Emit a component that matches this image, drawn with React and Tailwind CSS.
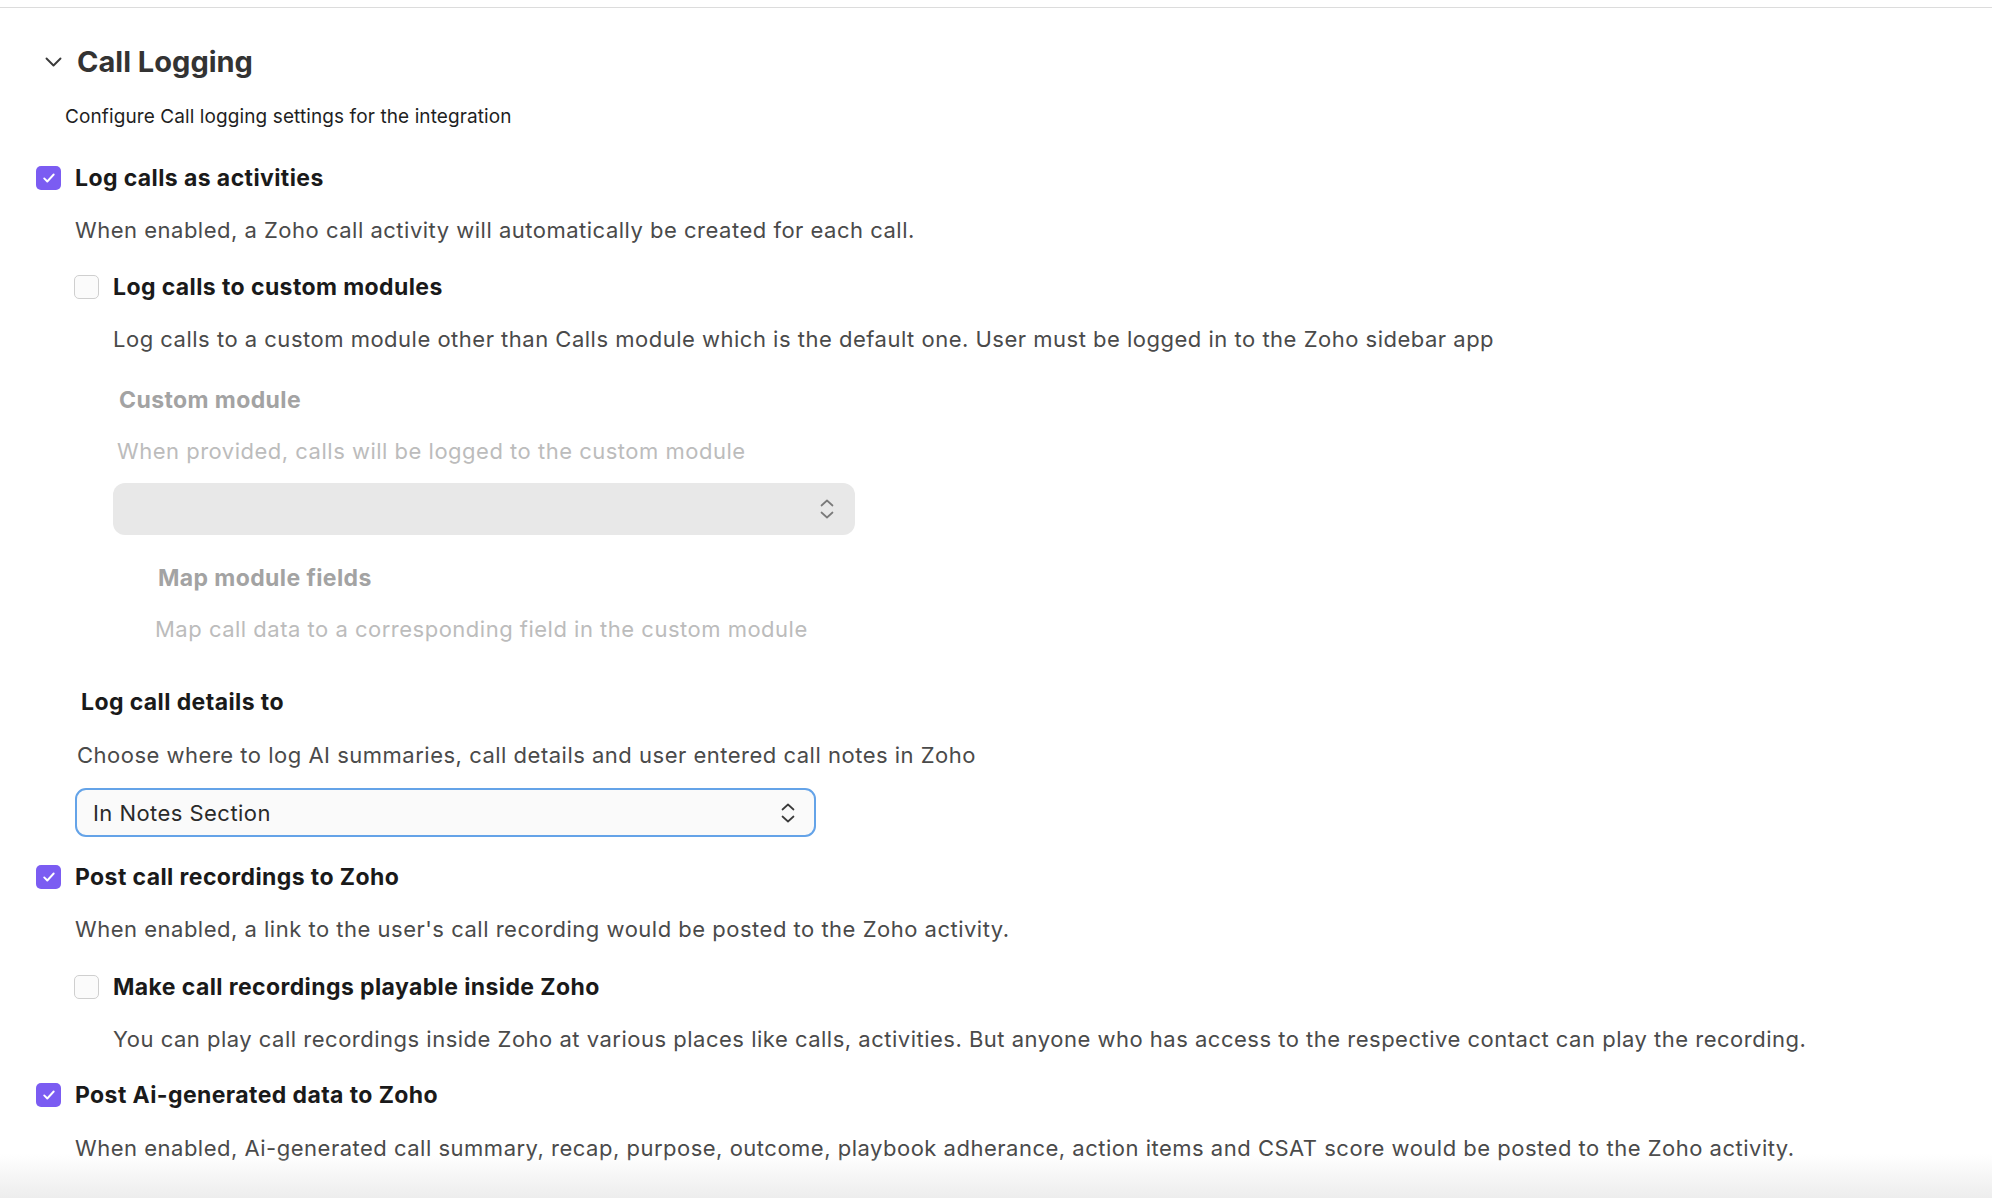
import React from "react";

function Checkbox({ checked }) {
  if (checked) {
    return (
      <div className="w-[25px] h-[24px] rounded-[5px] bg-[#7b5cf2] flex items-center justify-center shrink-0">
        <svg width="16" height="16" viewBox="0 0 16 16" fill="none">
          <path d="M3.2 8.4l3.1 3.1 6.4-7" stroke="#ffffff" strokeWidth="1.9" strokeLinecap="round" strokeLinejoin="round" />
        </svg>
      </div>
    );
  }
  return <div className="w-[25px] h-[24px] rounded-[5px] border border-[#cfcfcf] bg-[#fbfbfb] shrink-0" />;
}

function UpDown({ color }) {
  return (
    <svg width="16" height="24" viewBox="0 0 16 24" fill="none">
      <path d="M2.5 8.5L8 3.5l5.5 5" stroke={color} strokeWidth="1.7" strokeLinecap="round" strokeLinejoin="round" />
      <path d="M2.5 15.5L8 20.5l5.5-5" stroke={color} strokeWidth="1.7" strokeLinecap="round" strokeLinejoin="round" />
    </svg>
  );
}

function CheckRow({ checked, label, className }) {
  return (
    <div className={"flex items-center gap-[14px] h-[28px] " + className}>
      <Checkbox checked={checked} />
      <span className="text-[23px] leading-[28px] font-bold text-[#1a1a1a] tracking-[0.4px]">{label}</span>
    </div>
  );
}

function Desc({ children, className }) {
  return <p className={"text-[22px] leading-[28px] text-[#4a4a4a] tracking-[0.5px] whitespace-nowrap " + className}>{children}</p>;
}

export default function App() {
  return (
    <div className="relative w-full h-[1198px] overflow-hidden bg-white" style={{ fontFamily: "Inter, 'Noto Sans', sans-serif" }}>
      <div className="pt-[7px]">
        <div className="h-px bg-[#dcdcdc]" />
      </div>

      <div className="flex items-center gap-[15px] pl-[45px] mt-[36px] h-[36px]">
        <svg width="17" height="10" viewBox="0 0 17 10" fill="none">
          <path d="M1.5 1.5l7 7 7-7" stroke="#3a3a3a" strokeWidth="1.9" strokeLinecap="round" strokeLinejoin="round" />
        </svg>
        <h1 className="text-[29px] leading-[36px] font-bold text-[#333333]">Call Logging</h1>
      </div>

      <p className="pl-[65px] mt-[25px] text-[19px] leading-[24px] text-[#1f1f1f] tracking-[0.1px]">
        Configure Call logging settings for the integration
      </p>

      <CheckRow checked label="Log calls as activities" className="pl-[36px] mt-[35px]" />
      <Desc className="pl-[75px] mt-[24px]">When enabled, a Zoho call activity will automatically be created for each call.</Desc>

      <CheckRow checked={false} label="Log calls to custom modules" className="pl-[74px] mt-[29px]" />
      <Desc className="pl-[113px] mt-[24px]">
        Log calls to a custom module other than Calls module which is the default one. User must be logged in to the Zoho sidebar app
      </Desc>

      <div className="pl-[119px] mt-[33px] text-[23px] leading-[28px] font-bold text-[#a3a3a3] tracking-[0.4px]">Custom module</div>
      <p className="pl-[117px] mt-[23px] text-[22px] leading-[28px] text-[#bcbcbc] tracking-[0.5px]">
        When provided, calls will be logged to the custom module
      </p>
      <div className="ml-[113px] mt-[18px] w-[742px] h-[52px] rounded-[12px] bg-[#e8e8e8] flex items-center justify-end pr-[20px]">
        <UpDown color="#7a7a7a" />
      </div>

      <div className="pl-[158px] mt-[29px] text-[23px] leading-[28px] font-bold text-[#a3a3a3] tracking-[0.4px]">Map module fields</div>
      <p className="pl-[155px] mt-[23px] text-[22px] leading-[28px] text-[#bcbcbc] tracking-[0.5px]">
        Map call data to a corresponding field in the custom module
      </p>

      <div className="pl-[81px] mt-[45px] text-[23px] leading-[28px] font-bold text-[#1a1a1a] tracking-[0.4px]">Log call details to</div>
      <Desc className="pl-[77px] mt-[25px]">Choose where to log AI summaries, call details and user entered call notes in Zoho</Desc>
      <div className="ml-[75px] mt-[19px] w-[741px] h-[49px] rounded-[11px] border-2 border-[#64a3e8] bg-[#fafafa] flex items-center justify-between pl-[16px] pr-[18px]">
        <span className="text-[22px] leading-[28px] text-[#2a2a2a] tracking-[0.45px]">In Notes Section</span>
        <UpDown color="#3a3a3a" />
      </div>

      <CheckRow checked label="Post call recordings to Zoho" className="pl-[36px] mt-[26px]" />
      <Desc className="pl-[75px] mt-[24px]">When enabled, a link to the user's call recording would be posted to the Zoho activity.</Desc>

      <CheckRow checked={false} label="Make call recordings playable inside Zoho" className="pl-[74px] mt-[30px]" />
      <Desc className="pl-[113px] mt-[24px]">
        You can play call recordings inside Zoho at various places like calls, activities. But anyone who has access to the respective contact can play the recording.
      </Desc>

      <CheckRow checked label="Post Ai-generated data to Zoho" className="pl-[36px] mt-[28px]" />
      <Desc className="pl-[75px] mt-[25px]">
        When enabled, Ai-generated call summary, recap, purpose, outcome, playbook adherance, action items and CSAT score would be posted to the Zoho activity.
      </Desc>

      <div className="pointer-events-none absolute left-0 right-0 bottom-0 h-[44px] bg-linear-to-b from-[#ffffff00] to-[#ededed]" />
    </div>
  );
}
